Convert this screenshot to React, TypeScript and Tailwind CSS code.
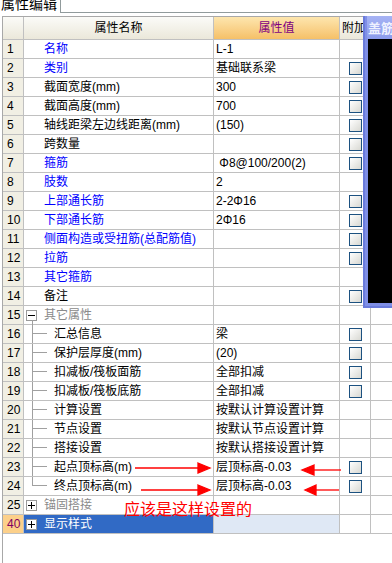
type Row = {
  n: string;
  name: string;
  value?: string;
  tone?: "blue" | "black" | "gray";
  cb?: boolean;
  kind?: "item" | "group" | "child" | "last";
  open?: boolean;
};

const ROWS: Row[] = [
  { n: "1", name: "名称", value: "L-1", tone: "blue" },
  { n: "2", name: "类别", value: "基础联系梁", tone: "blue", cb: true },
  { n: "3", name: "截面宽度(mm)", value: "300", cb: true },
  { n: "4", name: "截面高度(mm)", value: "700", cb: true },
  { n: "5", name: "轴线距梁左边线距离(mm)", value: "(150)", cb: true },
  { n: "6", name: "跨数量", value: "", cb: true },
  { n: "7", name: "箍筋", value: " Φ8@100/200(2)", tone: "blue", cb: true },
  { n: "8", name: "肢数", value: "2", tone: "blue" },
  { n: "9", name: "上部通长筋", value: "2-2Φ16", tone: "blue", cb: true },
  { n: "10", name: "下部通长筋", value: "2Φ16", tone: "blue", cb: true },
  { n: "11", name: "侧面构造或受扭筋(总配筋值)", tone: "blue", cb: true },
  { n: "12", name: "拉筋", tone: "blue", cb: true },
  { n: "13", name: "其它箍筋", tone: "blue" },
  { n: "14", name: "备注", cb: true },
  { n: "15", name: "其它属性", tone: "gray", kind: "group", open: true },
  { n: "16", name: "汇总信息", value: "梁", kind: "child", cb: true },
  { n: "17", name: "保护层厚度(mm)", value: "(20)", kind: "child", cb: true },
  { n: "18", name: "扣减板/筏板面筋", value: "全部扣减", kind: "child", cb: true },
  { n: "19", name: "扣减板/筏板底筋", value: "全部扣减", kind: "child", cb: true },
  { n: "20", name: "计算设置", value: "按默认计算设置计算", kind: "child" },
  { n: "21", name: "节点设置", value: "按默认节点设置计算", kind: "child" },
  { n: "22", name: "搭接设置", value: "按默认搭接设置计算", kind: "child" },
  { n: "23", name: "起点顶标高(m)", value: "层顶标高-0.03", kind: "child", cb: true },
  { n: "24", name: "终点顶标高(m)", value: "层顶标高-0.03", kind: "last", cb: true },
  { n: "25", name: "锚固搭接", tone: "gray", kind: "group" },
];

const toneClass = {
  blue: "text-[#0000ff]",
  black: "text-black",
  gray: "text-[#8a8a8a]",
};

const ExpandBox = ({ open }: { open?: boolean }) => (
  <svg width="11" height="11" viewBox="0 0 11 11" className="shrink-0">
    <rect x="0.5" y="0.5" width="10" height="10" fill="#ffffff" stroke="#9a9a9a" />
    <line x1="2" y1="5.5" x2="9" y2="5.5" stroke="#000" />
    {!open && <line x1="5.5" y1="2" x2="5.5" y2="9" stroke="#000" />}
  </svg>
);

const Check = () => (
  <div className="ml-[9px] mt-[3px] w-[13px] h-[13px] border border-[#1c5180] bg-linear-to-br from-white to-[#d8d8d2]" />
);

const NameCell = ({ row }: { row: Row }) => {
  const kind = row.kind ?? "item";
  const tone = toneClass[row.tone ?? "black"];

  if (kind === "group") {
    return (
      <div className="relative w-[190px] h-full flex items-center pl-[2px] border-r border-[#c0c0c0]">
        <ExpandBox open={row.open} />
        <span className={`ml-[7px] ${tone}`}>{row.name}</span>
        {row.open && (
          <div className="absolute left-[8px] top-[14px] bottom-[-1px] w-px bg-[#a0a0a0]" />
        )}
      </div>
    );
  }

  if (kind === "child" || kind === "last") {
    return (
      <div className="w-[190px] h-full flex pl-[8px] border-r border-[#c0c0c0]">
        <div className="w-[15px] h-full flex flex-col">
          <div className="h-[9px] border-l border-b border-[#a0a0a0]" />
          <div className={`flex-1 ${kind === "child" ? "border-l border-[#a0a0a0]" : ""}`} />
        </div>
        <span className={`ml-[7px] self-center ${tone}`}>{row.name}</span>
      </div>
    );
  }

  return (
    <div className="w-[190px] h-full flex items-center pl-[20px] border-r border-[#c0c0c0] whitespace-nowrap overflow-hidden">
      <span className={tone}>{row.name}</span>
    </div>
  );
};

const TableRow = ({ row }: { row: Row }) => (
  <div className="flex h-[19px] border-b border-[#c0c0c0]">
    <div className="w-[21px] h-full flex items-center pl-[4px] bg-[#f1efe4] border-r border-[#c0c0c0] text-black">
      {row.n}
    </div>
    <NameCell row={row} />
    <div className="w-[126px] h-full flex items-center pl-[2px] border-r border-[#c0c0c0] whitespace-pre text-black">
      {row.value}
    </div>
    <div className="w-[31px] h-full border-r border-[#c0c0c0]">{row.cb && <Check />}</div>
  </div>
);

const App = () => {
  return (
    <div className="relative w-[392px] h-[563px] overflow-hidden bg-white text-[12px] leading-[14px] font-['Liberation_Sans','Noto_Sans_CJK_SC',sans-serif]">
      {/* tab strip */}
      <div className="flex h-[13px]">
        <div className="w-[61px] h-full border-r border-[#919b9c] overflow-hidden bg-white">
          <div className="-mt-[4px] pl-[1px] text-[14px] leading-[14px] text-black font-['Noto_Sans_CJK_SC',sans-serif]">
            属性编辑
          </div>
        </div>
        <div className="flex-1 border-b border-[#919b9c]" />
      </div>
      <div className="h-[3px]" />

      {/* property grid */}
      <div className="ml-[2px] h-[547px] border-l border-t border-[#a8a8a8]">
        <div className="flex h-[23px] border-b border-[#c0c0c0]">
          <div className="w-[21px] h-full border-r border-[#c0c0c0] bg-linear-to-b from-[#fbfbf8] to-[#ebe8da]" />
          <div className="w-[190px] h-full flex items-center justify-center border-r border-[#c0c0c0] bg-linear-to-b from-[#fbfbf8] to-[#ebe8da] text-black">
            属性名称
          </div>
          <div className="w-[126px] h-full flex items-center justify-center border-r border-[#c0c0c0] bg-linear-to-b from-[#fde6ae] to-[#f5c067] text-[#800080]">
            属性值
          </div>
          <div className="w-[31px] h-full flex items-center pl-[2px] border-r border-[#c0c0c0] bg-linear-to-b from-[#fbfbf8] to-[#ebe8da] text-black overflow-hidden whitespace-nowrap">
            附加
          </div>
        </div>

        {ROWS.map((row) => (
          <TableRow key={row.n} row={row} />
        ))}

        {/* selected row */}
        <div className="flex h-[19px] border-b border-[#c0c0c0]">
          <div className="w-[21px] h-full flex items-center pl-[4px] bg-[#fcd08a] border-r border-[#c0c0c0] text-[#800060]">
            40
          </div>
          <div className="w-[190px] h-full flex items-center pl-[2px] bg-[#316ac5] border-r border-[#c0c0c0]">
            <ExpandBox />
            <span className="ml-[7px] text-white">显示样式</span>
          </div>
          <div className="w-[126px] h-full bg-[#dfe8f5] border-r border-[#c0c0c0]" />
          <div className="w-[31px] h-full border-r border-[#c0c0c0]" />
        </div>
      </div>

      {/* floating window on the right */}
      <div className="absolute left-[363px] top-[16px] w-[40px] h-[292px] flex flex-col bg-[#7f8fe6] border-l-[2px] border-b-[2px] border-[#6a7bdc] px-[2px] pb-[3px]">
        <div className="h-[23px] flex items-center pl-[1px] bg-linear-to-b from-[#a6b3f4] to-[#8b9bec] text-[13px] font-bold text-[#eef1ff] whitespace-nowrap overflow-hidden font-['Noto_Sans_CJK_SC',sans-serif]">
          盖筋
        </div>
        <div className="flex-1 bg-black ml-[1px]" />
      </div>

      {/* red annotation */}
      <svg className="absolute inset-0 pointer-events-none" width="392" height="563">
        <g stroke="#ff0000" strokeWidth="1.3" fill="#ff0000">
          <line x1="135" y1="468" x2="200" y2="468" />
          <polygon points="198,463 210,468 198,473" />
          <line x1="313" y1="470" x2="341" y2="470" />
          <polygon points="314,465 302,470 314,475" />
          <line x1="141" y1="490" x2="200" y2="490" />
          <polygon points="198,485 210,490 198,495" />
          <line x1="315" y1="490" x2="339" y2="490" />
          <polygon points="316,485 305,490 316,495" />
        </g>
      </svg>
      <div className="absolute left-[124px] top-[500px] text-[16px] leading-[16px] text-[#ff0000] font-['Noto_Sans_CJK_SC',sans-serif] whitespace-nowrap">
        应该是这样设置的
      </div>
    </div>
  );
};

export default App;
